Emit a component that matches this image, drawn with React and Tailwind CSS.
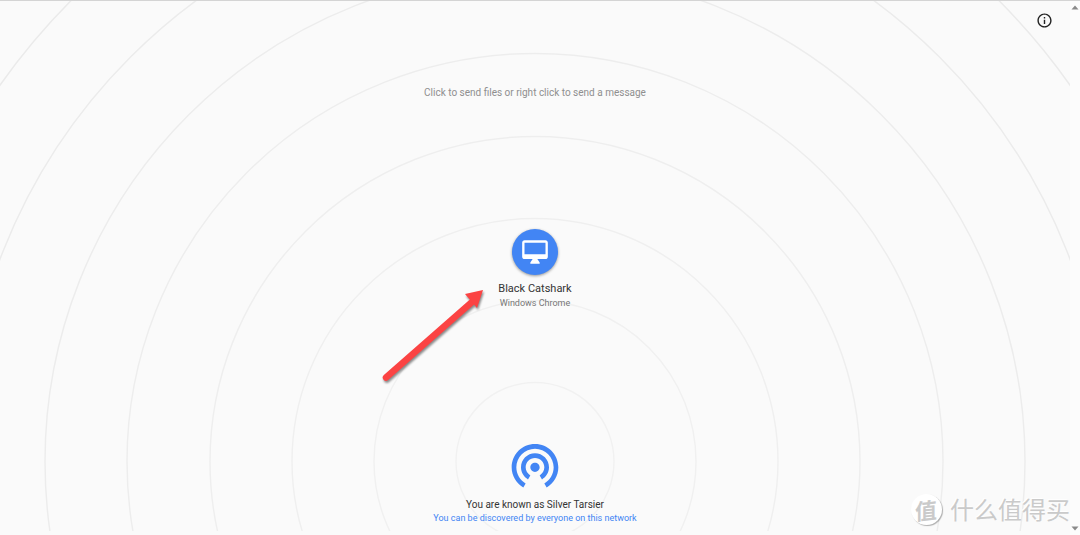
import { MdInfoOutline, MdWifiTethering } from 'react-icons/md';

const RING_RADII = [79, 161, 243, 325, 408, 490, 572, 654];

function Rings() {
  return (
    <svg className="pointer-events-none absolute inset-0 h-full w-full" aria-hidden="true">
      <svg x="50%" y="100%" overflow="visible">
        {RING_RADII.map((radius) => (
          <circle
            key={radius}
            cx="0"
            cy="-69.5"
            r={radius}
            fill="none"
            stroke="#000"
            strokeOpacity={0.03 + radius / 20000}
            strokeWidth="1.5"
          />
        ))}
      </svg>
    </svg>
  );
}

function DesktopIcon() {
  return (
    <svg width="28" height="28" viewBox="0 0 24 24" fill="currentColor" aria-hidden="true">
      <path d="M21 2H3c-1.100 0-2 .9-2 2v12c0 1.100.9 2 2 2h7l-2 3v1h8v-1l-2-3h7c1.100 0 2-.9 2-2V4c0-1.100-.9-2-2-2zm0 12H3V4h18v10z" />
    </svg>
  );
}

function Peer({ name, device }) {
  return (
    <button type="button" className="relative flex flex-col items-center">
      <span className="flex size-[46px] items-center justify-center rounded-full bg-[#4285f4] text-white shadow-[0_1px_3px_rgba(0,0,0,0.4)]">
        <DesktopIcon />
      </span>
      <span className="mt-1.5 text-[11px] leading-4 text-[#333]">{name}</span>
      <span className="text-[9px] leading-3 text-[#777]">{device}</span>
    </button>
  );
}

function Arrow() {
  return (
    <svg
      className="pointer-events-none absolute top-[283px] left-1/2 -ml-[156px] h-[104px] w-[112px] drop-shadow-[1px_2px_1px_rgba(0,0,0,0.45)]"
      viewBox="0 0 112 104"
      aria-hidden="true"
    >
      <path d="M7 93.500L93 18" stroke="#fb4343" strokeWidth="6.500" strokeLinecap="round" />
      <path d="M104 6L86 10L98 24Z" fill="#fb4343" />
    </svg>
  );
}

function Watermark() {
  return (
    <div className="pointer-events-none absolute right-0 bottom-2.5 flex items-center gap-2 font-['Noto_Sans_CJK_SC',sans-serif] text-[#cacaca]">
      <span className="flex size-[31px] items-center justify-center rounded-full bg-white text-[22px] leading-none font-bold shadow-[1px_1px_1px_rgba(0,0,0,0.3)]">
        <span className="-rotate-6 -skew-x-6">值</span>
      </span>
      <span className="text-[24px] leading-8 whitespace-nowrap [text-shadow:-1px_-1px_0_#fff]">什么值得买</span>
    </div>
  );
}

function Scrollbar() {
  return (
    <div className="flex w-[10px] shrink-0 flex-col items-center justify-between bg-[#fcfcfc] pt-1 pb-1 text-[#8a8a8a]">
      <svg width="8" height="5" viewBox="0 0 8 5" fill="currentColor" aria-hidden="true">
        <path d="M4 0.500L7.500 4.500H0.500Z" />
      </svg>
      <svg width="8" height="5" viewBox="0 0 8 5" fill="currentColor" aria-hidden="true">
        <path d="M4 4.500L0.500 0.500H7.500Z" />
      </svg>
    </div>
  );
}

export default function App() {
  return (
    <div className="flex min-h-screen border-t border-[#d4d4d4] bg-[#fafafa] font-[Roboto,sans-serif]">
      <div className="relative flex min-w-0 flex-1 flex-col pb-1">
        <div className="relative flex flex-1 flex-col items-center overflow-hidden">
          <Rings />
          <header className="relative flex w-full justify-end px-[17px] pt-[11px]">
            <button type="button" aria-label="About" className="text-[#222]">
              <MdInfoOutline size={17} />
            </button>
          </header>
          <p className="relative mt-14 text-[10px] leading-4 text-[#8f8f8f]">
            Click to send files or right click to send a message
          </p>
          <main className="flex flex-1 items-center">
            <Peer name="Black Catshark" device="Windows Chrome" />
          </main>
          <footer className="relative flex flex-col items-center pb-2 text-center">
            <MdWifiTethering size={56} className="text-[#4285f4]" />
            <p className="mt-1 text-[10px] leading-4 text-[#333]">You are known as Silver Tarsier</p>
            <p className="text-[9px] leading-[10px] text-[#4285f4]">
              You can be discovered by everyone on this network
            </p>
          </footer>
          <Arrow />
        </div>
        <Watermark />
      </div>
      <Scrollbar />
    </div>
  );
}
